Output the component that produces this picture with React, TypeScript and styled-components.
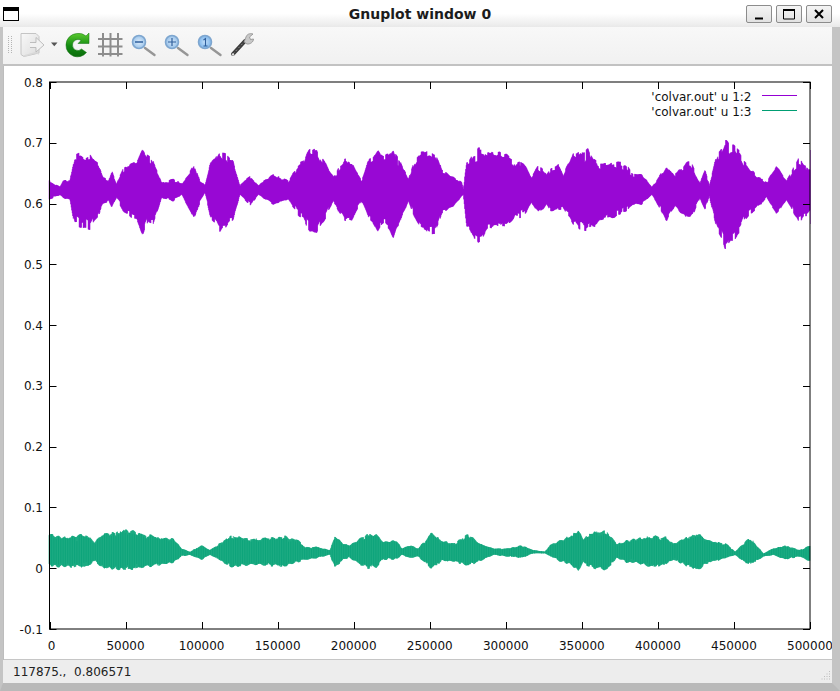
import * as React from 'react';
import styled, { createGlobalStyle } from 'styled-components';

const FONT = '"DejaVu Sans", Verdana, sans-serif';

const GlobalStyle = createGlobalStyle`
	html, body {
		margin: 0;
		padding: 0;
		background: #bdbdbd;
		font-family: ${FONT};
	}
`;

const Win = styled.div`
	width: 840px;
	height: 691px;
	display: flex;
	flex-direction: column;
	overflow: hidden;
`;

const TitleBar = styled.div`
	height: 27px;
	flex: none;
	display: grid;
	grid-template-columns: 1fr auto 1fr;
	align-items: center;
	padding: 0 8px 0 3px;
	box-sizing: border-box;
	background: linear-gradient(#ffffff 0%, #ffffff 50%, #e9e9e9 100%);
`;

const MenuIcon = styled.div`
	width: 16px;
	height: 14px;
	box-sizing: border-box;
	border: 1px solid #000;
	border-top-width: 4px;
	background: #fff;
	margin-top: 1px;
`;

const Title = styled.div`
	font-size: 14px;
	font-weight: bold;
	color: #1c1c1c;
	margin-left: 5px;
`;

const WmButtons = styled.div`
	display: flex;
	gap: 4px;
	justify-content: flex-end;
`;

const WmButton = styled.div`
	width: 26px;
	height: 18px;
	box-sizing: border-box;
	border: 1px solid #8c8c8c;
	border-radius: 2px;
	background: linear-gradient(#f4f4f4, #e2e2e2);
	display: flex;
	align-items: center;
	justify-content: center;
`;

const Frame = styled.div`
	flex: 1;
	min-height: 0;
	display: flex;
	flex-direction: column;
	border-left: 3px solid #c4c4c4;
	border-right: 8px solid #c4c4c4;
	border-bottom: 8px solid #b9b9b9;
`;

const Toolbar = styled.div`
	height: 39px;
	flex: none;
	box-sizing: border-box;
	display: flex;
	align-items: center;
	padding: 0 0 2px 0;
	background: linear-gradient(#f8f8f8, #f1f1f1);
	border-bottom: 2px solid #c2c2c2;
`;

const Icons = styled.svg`
	display: block;
	filter: blur(0.35px);
`;

const Canvas = styled.div`
	flex: 1;
	min-height: 0;
	margin-left: 1px;
	background: #fff;
	border-bottom: 1px solid #c6c6c6;
	overflow: hidden;
`;

const Plot = styled.svg`
	display: block;
`;

const StatusBar = styled.div`
	height: 23px;
	flex: none;
	display: flex;
	align-items: center;
	justify-content: space-between;
	padding: 0 1px 0 10px;
	background: #ededed;
	font-size: 12px;
	color: #222;
	white-space: pre;
`;

const Grip = styled.svg`
	align-self: flex-end;
	margin-bottom: 1px;
`;

type Seg = [number, number, number];

// envelope read off the picture, segments as [x, top, bottom] relative to a crop origin at 3x
const toPx = (ox: number, oy: number, pts: Seg[]): Seg[] =>
	pts.map(([x, t, b]): Seg => [ox + x / 3, oy + t / 3, oy + b / 3]);

const PURPLE: Seg[] = [
	...toPx(40, 130, [
		[28, 150, 210], [60, 170, 195], [70, 150, 205], [90, 150, 210], [105, 65, 295], [150, 70, 300],
		[175, 100, 260], [190, 140, 225], [205, 150, 215], [215, 120, 235], [230, 160, 205], [250, 110, 250],
		[290, 90, 275], [310, 50, 320], [325, 70, 280], [340, 90, 285], [365, 155, 205], [400, 145, 215],
		[425, 160, 195], [465, 95, 275], [480, 150, 220], [495, 165, 190], [510, 100, 260], [540, 50, 310],
		[580, 90, 270], [600, 165, 195], [630, 135, 230], [655, 165, 195], [700, 130, 225], [745, 150, 210],
		[770, 110, 250],
	]),
	...toPx(290, 130, [
		[0, 160, 205], [10, 115, 245], [40, 85, 270], [60, 45, 310], [80, 45, 315], [105, 95, 270],
		[130, 140, 215], [150, 105, 255], [165, 85, 280], [185, 95, 275], [215, 150, 215], [235, 90, 265],
		[265, 55, 310], [285, 75, 285], [310, 50, 325], [335, 100, 265], [355, 145, 215], [380, 70, 280],
		[410, 50, 310], [435, 55, 320], [455, 115, 255], [490, 140, 230], [515, 155, 200], [520, 175, 195],
		[530, 95, 290], [565, 45, 345], [600, 65, 295], [630, 65, 300], [660, 75, 290], [675, 95, 265],
		[700, 95, 265], [725, 140, 220], [745, 100, 255], [770, 130, 225],
	]),
	...toPx(550, 130, [
		[0, 115, 245], [25, 100, 240], [40, 130, 240], [70, 65, 285], [105, 60, 310], [115, 50, 300],
		[130, 85, 295], [160, 100, 270], [195, 90, 265], [225, 95, 250], [250, 130, 225], [275, 130, 225],
		[305, 170, 195], [320, 150, 220], [350, 95, 280], [375, 130, 230], [420, 85, 280], [450, 160, 205],
		[465, 115, 245], [478, 165, 200], [495, 90, 280], [525, 25, 360], [560, 45, 330], [590, 100, 265],
		[620, 135, 240], [650, 155, 205], [680, 105, 255], [710, 150, 210], [745, 80, 280], [780, 115, 250],
	]),
];

const GREEN: Seg[] = [
	...toPx(40, 520, [
		[28, 40, 140], [70, 50, 145], [135, 40, 145], [165, 65, 125], [185, 40, 145], [260, 25, 155],
		[310, 40, 145], [400, 55, 130], [425, 85, 110], [450, 95, 105], [485, 75, 120], [510, 90, 105],
		[545, 65, 125], [570, 45, 145], [640, 55, 135], [700, 50, 140], [735, 45, 145],
	]),
	...toPx(290, 520, [
		[0, 55, 135], [20, 55, 130], [45, 80, 120], [80, 80, 115], [120, 90, 105], [135, 45, 145],
		[160, 70, 120], [180, 75, 115], [230, 40, 148], [260, 40, 145], [280, 65, 120], [320, 60, 120],
		[335, 85, 105], [360, 75, 115], [385, 85, 110], [425, 35, 150], [455, 60, 125], [490, 70, 125],
		[535, 40, 140], [570, 70, 125], [610, 85, 105], [650, 85, 110], [695, 75, 115], [730, 90, 100],
		[765, 95, 100],
	]),
	...toPx(550, 520, [
		[0, 75, 110], [30, 60, 125], [60, 45, 135], [85, 30, 155], [100, 55, 130], [120, 35, 145],
		[170, 30, 155], [200, 70, 115], [230, 60, 130], [255, 55, 130], [315, 45, 145], [350, 50, 135],
		[370, 70, 120], [440, 35, 155], [475, 60, 130], [530, 70, 115], [555, 95, 105], [600, 50, 140],
		[640, 100, 110], [670, 85, 105], [705, 75, 120], [750, 90, 110], [780, 75, 125],
	]),
];

// one vertical stroke per sample, the envelope eaten into by a beat and by blocky noise
const makeWave = (env: Seg[], step: number, beat: number, noise: number, seed: number): string => {
	let s = seed;
	const rnd = () => {
		s = (s * 16807) % 2147483647;
		return s / 2147483647;
	};
	let d = '';
	let i = 0;
	let nt = 0;
	let nb = 0;
	let left = 0;
	for (let x = env[0][0]; x <= 810; x += step) {
		while (i < env.length - 2 && env[i + 1][0] < x) i++;
		const [x0, t0, b0] = env[i];
		const [x1, t1, b1] = env[i + 1];
		const k = Math.min(1, (x - x0) / (x1 - x0));
		const top = t0 + (t1 - t0) * k;
		const bot = b0 + (b1 - b0) * k;
		const amp = (bot - top) / 2;
		if (left <= 0) {
			nt = rnd() * rnd();
			nb = rnd() * rnd();
			left = 0.8 + rnd() * 2;
		}
		left -= step;
		const w = 0.5 + 0.5 * Math.sin(x * 0.83 + 1.3 * Math.sin(x * 0.11));
		const inset = amp * beat * w;
		d += `M${x.toFixed(1)} ${(top + inset + nt * amp * noise).toFixed(1)}V${(bot - inset - nb * amp * noise).toFixed(1)}`;
	}
	return d;
};

const purplePath = makeWave(PURPLE, 0.5, 0.05, 0.28, 77);
const greenLight = makeWave(GREEN, 0.5, 0.1, 0.2, 1234);
const greenDark = makeWave(GREEN, 2.3, 0.12, 0.3, 4242);

const LEFT = 49.5;
const RIGHT = 810;
const TOP = 82;
const BOTTOM = 629;
const yLabels = ['0.8', '0.7', '0.6', '0.5', '0.4', '0.3', '0.2', '0.1', '0', '-0.1'];
const xLabels = ['0', '50000', '100000', '150000', '200000', '250000', '300000', '350000', '400000', '450000', '500000'];
const xAt = (i: number) => LEFT + ((RIGHT - LEFT) * i) / 10;
const yAt = (i: number) => TOP + ((BOTTOM - TOP) * i) / 9;

const Chart: React.FC = () => (
	<Plot width={828} height={593} viewBox="4 66 828 593" fontFamily={FONT} fontSize={12} fill="#111">
		<path d={greenLight} stroke="#16a87f" strokeWidth={1} fill="none" />
		<path d={greenDark} stroke="#0aa279" strokeWidth={0.8} fill="none" />
		<path d={purplePath} stroke="#9400d3" strokeWidth={1} fill="none" />
		<path d="M810.5 150V224" stroke="#9400d3" strokeWidth={1} fill="none" opacity={0.5} />
		<rect x={LEFT} y={TOP} width={RIGHT - LEFT} height={BOTTOM - TOP} fill="none" stroke="#000" strokeWidth={1} />
		{yLabels.map((l, i) => (
			<React.Fragment key={l}>
				<path d={`M${LEFT} ${Math.round(yAt(i)) + 0.5}h7M${RIGHT} ${Math.round(yAt(i)) + 0.5}h-7`} stroke="#000" />
				<text x={43} y={yAt(i) + 4.5} textAnchor="end">{l}</text>
			</React.Fragment>
		))}
		{xLabels.map((l, i) => (
			<React.Fragment key={l}>
				<path d={`M${Math.round(xAt(i)) + 0.5} ${BOTTOM}v-7M${Math.round(xAt(i)) + 0.5} ${TOP}v7`} stroke="#000" />
				<text x={xAt(i) + (i === 0 ? 2 : 0)} y={650} textAnchor="middle">{l}</text>
			</React.Fragment>
		))}
		<text x={751.5} y={101} textAnchor="end">'colvar.out' u 1:2</text>
		<text x={751.5} y={116} textAnchor="end">'colvar.out' u 1:3</text>
		<path d="M762 95.5h35" stroke="#9400d3" />
		<path d="M762 110.5h35" stroke="#009e73" />
	</Plot>
);

const Lens: React.FC<{ cx: number; id: string; children?: React.ReactNode }> = ({ cx, id, children }) => (
	<g>
		<path d={`M${cx + 6} 49L${cx + 15.5} 56`} stroke="#969696" strokeWidth={2.4} strokeLinecap="round" />
		<circle cx={cx} cy={43} r={6.5} fill={`url(#${id})`} stroke="#7ea6cf" strokeWidth={1.6} />
		{children}
	</g>
);

const ToolIcons: React.FC = () => (
	<Icons width={260} height={37} viewBox="3 27 260 37">
		<defs>
			<linearGradient id="page" x1="0" y1="0" x2="1" y2="1">
				<stop offset="0" stopColor="#f8f8f8" />
				<stop offset="1" stopColor="#dcdcdc" />
			</linearGradient>
			<linearGradient id="green" x1="0" y1="0" x2="0" y2="1">
				<stop offset="0" stopColor="#5ccb2f" />
				<stop offset="0.55" stopColor="#128a12" />
				<stop offset="1" stopColor="#0b6b0b" />
			</linearGradient>
			<radialGradient id="lens1"><stop offset="0" stopColor="#dcecfb" /><stop offset="1" stopColor="#9cc4ea" /></radialGradient>
			<radialGradient id="lens2"><stop offset="0" stopColor="#d6e8fa" /><stop offset="1" stopColor="#96c0e8" /></radialGradient>
			<radialGradient id="lens3"><stop offset="0" stopColor="#c4e0fa" /><stop offset="1" stopColor="#7cb4ea" /></radialGradient>
		</defs>
		{/* handle */}
		<path d="M8.5 37v17M11.5 37v17" stroke="#b5b5b5" strokeWidth={1} strokeDasharray="1 1" />
		{/* document */}
		<path d="M21 34.5H36L39 37.500V54L24 57.500L21 55.500Z" fill="url(#page)" stroke="#c4c4c4" />
		<path d="M24 57L36 53.500L39 55" stroke="#d8d8d8" strokeWidth={1.5} fill="none" />
		<path d="M30 43.500H36V38.500L44 46L36 53V48.500H30" fill="#f2f2f2" stroke="#b8b8b8" strokeWidth={0.9} />
		<path d="M51 43.5h6.5l-3.2 3.8z" fill="#555" />
		{/* reload */}
		<path
			d="M77 34.5a11.5 11.5 0 0 0-11 11.5a11.5 11.5 0 0 0 20.5 7.5l-5-3.5a5.3 5.3 0 0 1-9-4a5.4 5.4 0 0 1 5.5-5.5a5 5 0 0 1 3 1l-3 3L89 44.5V34l-3 3a11 11 0 0 0-9-2.5Z"
			fill="url(#green)"
			stroke="#0d6e0d"
			strokeWidth={0.5}
		/>
		{/* grid */}
		<path d="M103 34v23.500M110.500 34v23.500M118 34v23.500M98 40h24.500M98 47.500h24.500M98 55h24.500" stroke="#8d8d8d" strokeWidth={2} fill="none" />
		{/* zoom */}
		<Lens cx={139} id="lens1"><path d="M135 43h8" stroke="#2f5f9c" strokeWidth={1.5} /></Lens>
		<Lens cx={172} id="lens2"><path d="M168 43h8M172 39v8" stroke="#2f5f9c" strokeWidth={1.2} /></Lens>
		<Lens cx={205} id="lens3"><path d="M203.500 41l2-1.500v7.500M203.500 47h4" stroke="#2f5f9c" strokeWidth={1.1} fill="none" /></Lens>
		{/* wrench */}
		<path d="M233 55L245 42" stroke="#3c3c3c" strokeWidth={4} strokeLinecap="round" />
		<path d="M233 55L245 42" stroke="#8a8a8a" strokeWidth={1} strokeDasharray="2 2" />
		<circle cx={233} cy={55.500} r={1.200} fill="#ddd" />
		<path d="M244 43L246 38C247 35 250 34 253 35L249.500 38L250.500 40.500L253.500 40C253.500 43 250 45.500 247 45Z" fill="#c8c8c8" stroke="#8d8d8d" strokeWidth={0.8} />
	</Icons>
);

export default function App() {
	return (
		<Win>
			<GlobalStyle />
			<TitleBar>
				<MenuIcon />
				<Title>Gnuplot window 0</Title>
				<WmButtons>
					<WmButton>
						<svg width="12" height="12" viewBox="0 0 12 12"><path d="M2 10.500h8" stroke="#000" strokeWidth={2} /></svg>
					</WmButton>
					<WmButton>
						<svg width="14" height="12" viewBox="0 0 14 12"><path d="M1.500 2h11v9h-11z" fill="none" stroke="#000" /><path d="M1 2h12" stroke="#000" strokeWidth={2} /></svg>
					</WmButton>
					<WmButton>
						<svg width="12" height="12" viewBox="0 0 12 12"><path d="M2 2l8 8M10 2l-8 8" stroke="#000" strokeWidth={2} /></svg>
					</WmButton>
				</WmButtons>
			</TitleBar>
			<Frame>
				<Toolbar>
					<ToolIcons />
				</Toolbar>
				<Canvas>
					<Chart />
				</Canvas>
				<StatusBar>
					<span>117875.,  0.806571</span>
					<Grip width="12" height="12" viewBox="0 0 12 12">
						<path d="M10.500 1v1M8 3.500v1M10.500 3.500v1M5.500 6v1M8 6v1M10.500 6v1M3 8.500v1M5.500 8.500v1M8 8.500v1M10.500 8.500v1" stroke="#bdbdbd" />
					</Grip>
				</StatusBar>
			</Frame>
		</Win>
	);
}
